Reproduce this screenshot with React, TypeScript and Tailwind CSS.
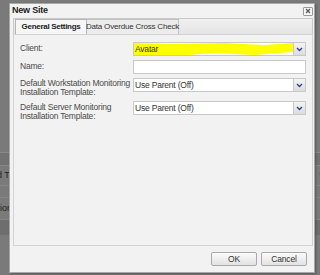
import React from "react";

const font = { fontFamily: '"Liberation Sans", Arial, sans-serif' };

type SelectProps = {
  value: string;
  highlight?: boolean;
};

const Arrow = () => (
  <div className="w-[12px] flex items-center justify-center border-l border-[#c9c9c9] bg-gradient-to-b from-[#f4f4f4] to-[#dcdcdc]">
    <svg width="7" height="5" viewBox="0 0 7 5">
      <path d="M1 1 L3.5 3.5 L6 1" stroke="#2b3f8f" strokeWidth="1.3" fill="none" />
    </svg>
  </div>
);

const Select = ({ value, highlight }: SelectProps) => (
  <div className="flex h-[14px] w-[173px] border border-[#c9c9c9] bg-white">
    <div className="relative flex-1 flex items-center pl-[1px] text-[8.5px] tracking-[-0.2px] text-[#333] overflow-hidden whitespace-nowrap">
      {highlight && (
        <svg className="absolute inset-0" width="160" height="14" viewBox="0 0 160 14" preserveAspectRatio="none">
          <path d="M0 0 L40 1 L90 0 L130 2 L160 0 L160 9 L120 12 L80 10 L40 13 L0 12 Z" fill="#ffff00" />
        </svg>
      )}
      <span className="relative">{value}</span>
    </div>
    <Arrow />
  </div>
);

const Row = ({ label, children, h, pt }: { label: React.ReactNode; children: React.ReactNode; h: string; pt: string }) => (
  <div className={`flex ${h}`}>
    <div className={`w-[113px] text-[8.5px] tracking-[-0.2px] leading-[9px] text-[#4a4a4a] whitespace-nowrap ${pt}`}>{label}</div>
    {children}
  </div>
);

const Button = ({ text }: { text: string }) => (
  <div className="w-[46px] h-[14px] border border-[#a9a9a9] rounded-[2px] bg-gradient-to-b from-[#fbfbfb] to-[#e2e2e2] flex items-center justify-center text-[8.5px] tracking-[-0.2px] text-[#333]">
    {text}
  </div>
);

export default function App() {
  return (
    <div className="relative w-[320px] h-[275px] bg-[#7a7a7a] overflow-hidden" style={font}>
      <div className="flex flex-col pt-[152px]">
        <div className="h-[13px] border-t border-[#8a8a8a] bg-[#727272]" />
        <div className="h-[20px] border-t border-[#888] text-[9px] text-[#222] flex items-center justify-between">
          <span className="-ml-[3px]">d T</span>
          <span className="-mr-[2px]">t</span>
        </div>
        <div className="h-[12px] border-t border-[#868686]" />
        <div className="h-[22px] border-t border-[#868686] text-[9px] text-[#222] flex items-center">
          <span>ion</span>
        </div>
        <div className="h-[16px] border-t border-[#868686] bg-[#6e6e6e]" />
      </div>

      <div className="absolute left-[9px] top-[3px] w-[306px] h-[270px] bg-[#f2f2f2] border border-[#a8a8a8] flex flex-col shadow-[1px_1px_2px_rgba(0,0,0,0.3)]">
        <div className="h-[14px] flex items-center justify-between pl-[2px] pr-[1px]">
          <span className="text-[9px] font-bold tracking-[-0.2px] text-[#222]">New Site</span>
          <div className="w-[10px] h-[9px] border border-[#9a9a9a] rounded-[1px] bg-[#f8f8f8] flex items-center justify-center">
            <svg width="6" height="6" viewBox="0 0 6 6">
              <path d="M1 1 L5 5 M5 1 L1 5" stroke="#555" strokeWidth="1.2" />
            </svg>
          </div>
        </div>

        <div className="ml-[3px] w-[300px] flex flex-col">
          <div className="flex items-end h-[16px] border border-b-0 border-[#c9c9c9] bg-gradient-to-b from-[#f0f0f0] to-[#e4e4e4] pl-[1px]">
            <div className="h-[15px] w-[72px] border border-b-0 border-[#b5b5b5] bg-[#f6f6f6] flex items-center justify-center text-[8px] tracking-[-0.3px] font-bold text-[#222] whitespace-nowrap">
              General Settings
            </div>
            <div className="h-[15px] w-[92px] border border-l-0 border-b-0 border-[#c4c4c4] bg-[#ececec] flex items-center justify-center text-[8px] tracking-[-0.2px] text-[#333] whitespace-nowrap">
              Data Overdue Cross Check
            </div>
          </div>
          <div className="h-[212px] border border-[#d2d2d2] bg-[#f2f2f2] pl-[6px] pt-[7px] flex flex-col gap-[4px]">
            <Row label="Client:" h="h-[14px]" pt="pt-[2px]">
              <Select value="Avatar" highlight />
            </Row>
            <Row label="Name:" h="h-[14px]" pt="pt-[2px]">
              <div className="h-[14px] w-[173px] border border-[#c9c9c9] bg-white" />
            </Row>
            <Row label={<>Default Workstation Monitoring<br />Installation Template:</>} h="h-[19px]" pt="pt-[1px]">
              <Select value="Use Parent (Off)" />
            </Row>
            <Row label={<>Default Server Monitoring<br />Installation Template:</>} h="h-[14px]" pt="pt-[2px]">
              <Select value="Use Parent (Off)" />
            </Row>
          </div>
        </div>

        <div className="flex justify-end gap-[4px] pr-[7px] pt-[6px]">
          <Button text="OK" />
          <Button text="Cancel" />
        </div>
      </div>
    </div>
  );
}
